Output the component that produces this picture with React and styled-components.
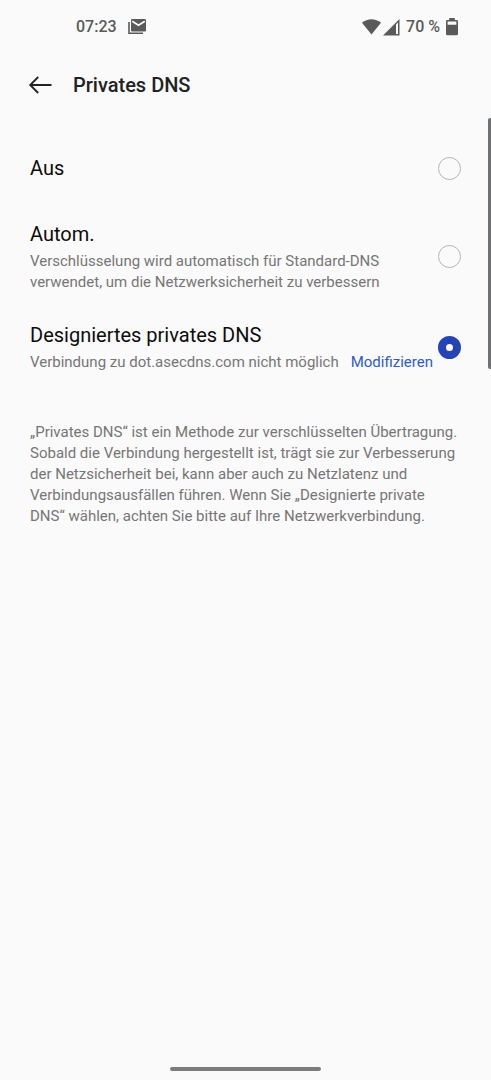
import React, { useState } from "react";
import styled, { createGlobalStyle } from "styled-components";

const GlobalStyle = createGlobalStyle`
  *, *::before, *::after { box-sizing: border-box; }
  body {
    margin: 0;
    background: #fafafa;
    color: #0c0c0c;
    font-family: Roboto, "Liberation Sans", sans-serif;
  }
`;

const Screen = styled.div`
  position: relative;
  display: flex;
  flex-direction: column;
  min-height: 100vh;
`;

const StatusBar = styled.div`
  display: flex;
  align-items: center;
  justify-content: space-between;
  height: 54px;
  padding: 0 33px 0 76px;
  color: #5a5a5a;
  font-size: 16px;
  font-weight: 500;
  line-height: 20px;
`;

const StatusGroup = styled.div`
  display: flex;
  align-items: center;
  gap: ${({ $gap }) => $gap}px;
`;

const Glyph = styled.svg`
  display: block;
  flex: none;
`;

const Header = styled.header`
  display: flex;
  align-items: center;
  gap: 21px;
  height: 62px;
  padding: 0 28px;
`;

const BackButton = styled.button`
  padding: 0;
  border: 0;
  background: none;
  color: #222;
  cursor: pointer;
`;

const Heading = styled.h1`
  margin: 0;
  color: #222;
  font-size: 20px;
  font-weight: 500;
  line-height: 28px;
`;

const Content = styled.main`
  flex: 1;
  padding: 14px 30px 0;
`;

const Options = styled.div`
  display: flex;
  flex-direction: column;
`;

const Option = styled.div`
  display: flex;
  align-items: center;
  gap: 5px;
  min-height: 76px;
  padding: 14px 0;
`;

const OptionText = styled.div`
  flex: 1;
  min-width: 0;
`;

const OptionTitle = styled.label`
  display: block;
  font-size: 20px;
  line-height: 28px;
`;

const Detail = styled.div`
  display: flex;
  justify-content: space-between;
  margin-top: 3px;
  color: #767676;
  font-size: 15px;
  line-height: 21px;
`;

const EditLink = styled.a`
  color: #2f5cc8;
  text-decoration: none;
`;

const Radio = styled.input`
  flex: none;
  appearance: none;
  width: 23px;
  height: 23px;
  margin: 0;
  border: 1px solid #b4b4b4;
  border-radius: 50%;

  &:checked {
    border: 8px solid #2443b5;
    background: #fff;
  }
`;

const Info = styled.p`
  margin: 35px 0 0;
  color: #767676;
  font-size: 15px;
  line-height: 21px;
`;

const ScrollThumb = styled.div`
  position: absolute;
  top: 118px;
  right: 0;
  width: 3px;
  height: 251px;
  border-radius: 2px 0 0 2px;
  background: #6e7173;
`;

const HomeBar = styled.div`
  align-self: center;
  width: 151px;
  height: 4px;
  margin: 9px 0;
  border-radius: 2px;
  background: #7c7c7c;
`;

const options = [
  { id: "off", title: "Aus" },
  {
    id: "auto",
    title: "Autom.",
    detail: "Verschlüsselung wird automatisch für Standard-DNS verwendet, um die Netzwerksicherheit zu verbessern",
  },
  {
    id: "custom",
    title: "Designiertes privates DNS",
    detail: "Verbindung zu dot.asecdns.com nicht möglich",
    action: "Modifizieren",
  },
];

const MailIcon = () => (
  <Glyph width="18" height="16" viewBox="0 0 18 16" fill="none">
    <path d="M1 3v11.200h14" stroke="#5a5a5a" strokeWidth="1.600" />
    <rect x="3" y="0" width="15" height="12.500" rx="1.200" fill="#5a5a5a" />
    <path d="M4.200 2.200l6.300 4 6.300-4" stroke="#fafafa" strokeWidth="1.600" />
  </Glyph>
);

const WifiIcon = () => (
  <Glyph width="19" height="16" viewBox="0 0 19 16">
    <path d="M0 3.800C5.400-.9 13.600-.9 19 3.800L9.500 15.600z" fill="#5a5a5a" />
  </Glyph>
);

const SignalIcon = () => (
  <Glyph width="17" height="17" viewBox="0 0 17 17">
    <path d="M0 16.500L16.500 0v16.500zM13 5.500v9.500h2V3.500z" fill="#5a5a5a" fillRule="evenodd" />
  </Glyph>
);

const BatteryIcon = () => (
  <Glyph width="12" height="18" viewBox="0 0 12 18">
    <path
      d="M3.200 0h5.600v2H10.600Q12 2 12 3.400v12.400q0 1.500-1.400 1.500H1.400Q0 17.300 0 15.800V3.400Q0 2 1.400 2h1.800zM1.600 3.600v3.200h8.800V3.600z"
      fill="#5a5a5a"
      fillRule="evenodd"
    />
  </Glyph>
);

const BackIcon = () => (
  <Glyph width="24" height="20" viewBox="0 0 24 20" fill="none" stroke="currentColor" strokeWidth="1.800">
    <path d="M23.500 10H2.500M10.200 2L2.200 10l8 8" />
  </Glyph>
);

export default function App() {
  const [selected, setSelected] = useState("custom");

  return (
    <Screen>
      <GlobalStyle />
      <StatusBar>
        <StatusGroup $gap={11}>
          <span>07:23</span>
          <MailIcon />
        </StatusGroup>
        <StatusGroup $gap={6}>
          <StatusGroup $gap={2}>
            <WifiIcon />
            <SignalIcon />
          </StatusGroup>
          <span>70 %</span>
          <BatteryIcon />
        </StatusGroup>
      </StatusBar>
      <Header>
        <BackButton type="button" aria-label="Zurück">
          <BackIcon />
        </BackButton>
        <Heading>Privates DNS</Heading>
      </Header>
      <Content>
        <Options role="radiogroup" aria-label="Privates DNS">
          {options.map(({ id, title, detail, action }) => (
            <Option key={id}>
              <OptionText>
                <OptionTitle htmlFor={id}>{title}</OptionTitle>
                {detail && (
                  <Detail>
                    <span>{detail}</span>
                    {action && <EditLink href="#edit">{action}</EditLink>}
                  </Detail>
                )}
              </OptionText>
              <Radio
                type="radio"
                id={id}
                name="dns"
                checked={selected === id}
                onChange={() => setSelected(id)}
              />
            </Option>
          ))}
        </Options>
        <Info>
          „Privates DNS“ ist ein Methode zur verschlüsselten Übertragung. Sobald die Verbindung
          hergestellt ist, trägt sie zur Verbesserung der Netzsicherheit bei, kann aber auch zu
          Netzlatenz und Verbindungsausfällen führen. Wenn Sie „Designierte private DNS“ wählen,
          achten Sie bitte auf Ihre Netzwerkverbindung.
        </Info>
      </Content>
      <ScrollThumb />
      <HomeBar />
    </Screen>
  );
}
